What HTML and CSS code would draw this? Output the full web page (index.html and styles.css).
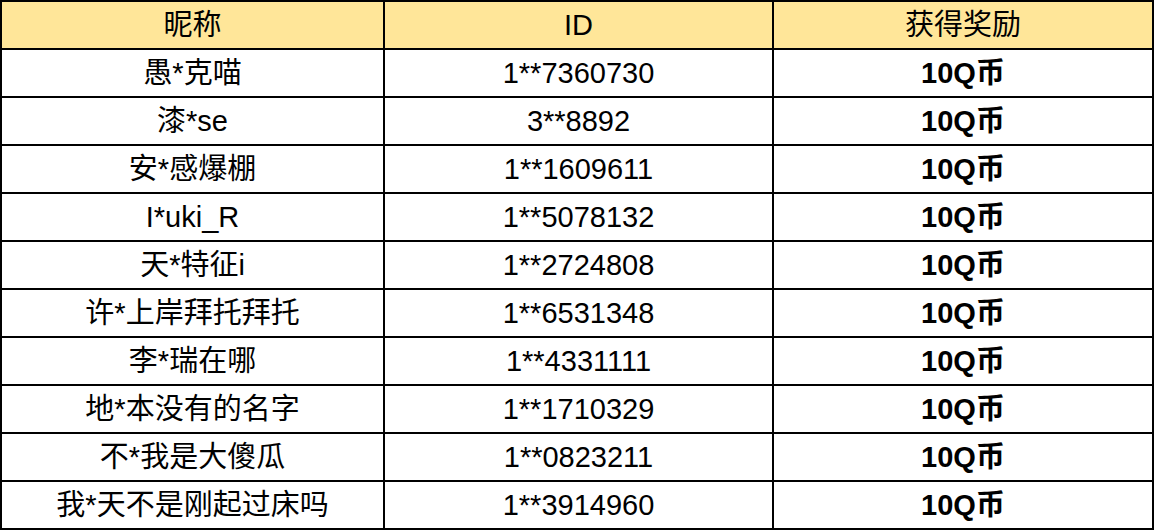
FILE: index.html
```html
<!DOCTYPE html>
<html lang="zh-CN">
<head>
<meta charset="utf-8">
<title>获奖名单</title>
<link rel="stylesheet" href="styles.css">
</head>
<body>
<table class="winners">
  <colgroup>
    <col class="col-name">
    <col class="col-id">
    <col class="col-reward">
  </colgroup>
  <thead>
    <tr><th>昵称</th><th>ID</th><th>获得奖励</th></tr>
  </thead>
  <tbody>
    <tr><td>愚*克喵</td><td>1**7360730</td><td class="reward">10Q币</td></tr>
    <tr><td>漆*se</td><td>3**8892</td><td class="reward">10Q币</td></tr>
    <tr><td>安*感爆棚</td><td>1**1609611</td><td class="reward">10Q币</td></tr>
    <tr><td>I*uki_R</td><td>1**5078132</td><td class="reward">10Q币</td></tr>
    <tr><td>天*特征i</td><td>1**2724808</td><td class="reward">10Q币</td></tr>
    <tr><td>许*上岸拜托拜托</td><td>1**6531348</td><td class="reward">10Q币</td></tr>
    <tr><td>李*瑞在哪</td><td>1**4331111</td><td class="reward">10Q币</td></tr>
    <tr><td>地*本没有的名字</td><td>1**1710329</td><td class="reward">10Q币</td></tr>
    <tr><td>不*我是大傻瓜</td><td>1**0823211</td><td class="reward">10Q币</td></tr>
    <tr><td>我*天不是刚起过床吗</td><td>1**3914960</td><td class="reward">10Q币</td></tr>
  </tbody>
</table>
</body>
</html>
```
FILE: styles.css
```css
html, body {
  margin: 0;
  padding: 0;
  background: #ffffff;
}

.winners {
  width: 1154px;
  table-layout: fixed;
  border-collapse: separate;
  border-spacing: 2px;
  background: #000000;
  font-family: "Liberation Sans", "Noto Sans CJK SC", sans-serif;
  font-size: 29px;
  color: #000000;
}

.col-name { width: 381px; }
.col-id { width: 387px; }
.col-reward { width: 378px; }

.winners th,
.winners td {
  height: 46px;
  padding: 0;
  text-align: center;
  vertical-align: middle;
  font-weight: normal;
  background: #ffffff;
  white-space: nowrap;
  line-height: 46px;
}

.winners th {
  background: #ffe699;
}

.winners td.reward {
  font-weight: bold;
}
```
